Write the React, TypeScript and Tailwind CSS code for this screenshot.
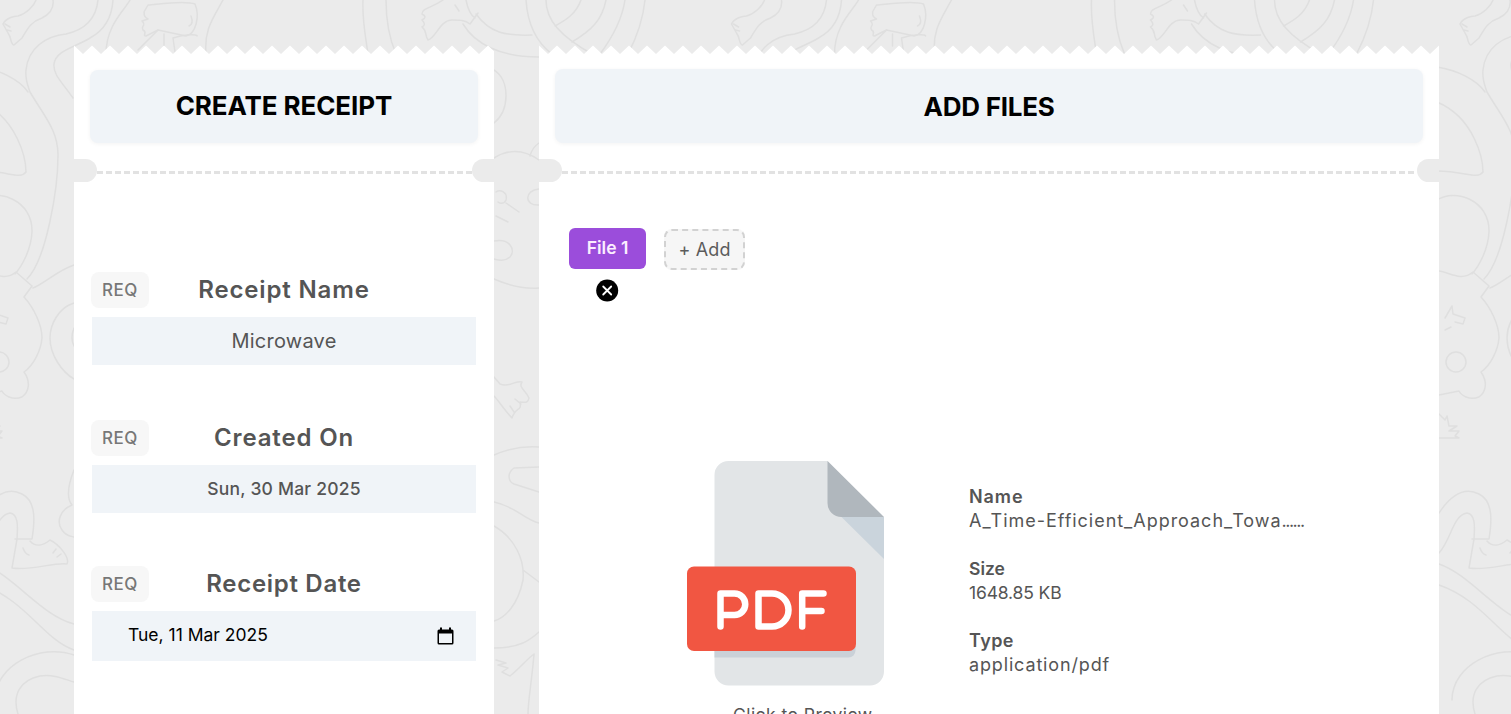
function Doodles() {
  return (
    <svg className="pointer-events-none absolute inset-0 h-full w-full" aria-hidden="true">
      <defs>
        <g id="doodle" fill="none" stroke="#dfdfdf" strokeWidth="1.5" strokeLinecap="round" strokeLinejoin="round">
          <path d="M53 0C54 8 50 14 42 18C30 22 27 30 22 38L14 45C10 44 12 38 8 33L3 24C6 18 14 16 18 16C26 14 34 6 36 0M5 24l5 3M7 30l4 1" />
          <path d="M98 0C96 20 84 30 66 34C46 36 28 48 26 70C25 80 28 86 30 92C44 116 58 130 58 155C58 190 46 260 27 279" />
          <path d="M113 0C112 16 105 30 90 38C74 48 56 50 54 64C53 75 62 82 73 98" />
          <path d="M-20 67C0 70 20 80 28 92M-20 102C18 118 26 160 26 172C20 180 8 171 -20 171M-20 200C-2 188 33 200 32 232C31 250 22 266 15 274" />
          <path d="M-18 271C-8 272 4 282 16 272L32 286L24 297C34 308 42 325 42 338C41 350 34 365 24 372C31 382 29 392 22 397C12 401 4 395 2 391L-18 395" />
          <path d="M33 288C44 284 58 270 74 265M74 303C58 308 50 325 50 338C50 355 62 372 74 379M74 328q-4 10 0 18" />
          <circle cx="-1" cy="362" r="10" />
          <path d="M-12 318L-5 306L-4 314L8 318L6 324L-2 322M-12 330l6-3M-18 414l6 6l2-4l2 10l8 0l-8 5l10 0l-4 5l4 2H-18" />
          <path d="M-18 513C-4 492 10 488 22 494C34 500 36 515 32 539H15M-18 553C-6 540 -4 515 10 513C18 514 18 525 17 539L12 568C30 571 55 562 67 564C70 558 60 545 50 540C44 545 36 548 30 541M23 548q2 6 6 7M56 549l-3 4M61 554l-4 3" />
          <path d="M-18 564C14 575 40 615 74 624M-18 585C26 600 44 640 74 650M-5 700C-5 665 40 643 74 655M18 714C12 695 20 680 40 676C54 674 64 679 74 682" />
          <path d="M74 470C66 490 68 500 72 505C60 510 56 522 62 530C66 536 70 536 74 537" />
          <path d="M144 12L148 5C160 4 185 0 195 4C200 16 196 34 186 36L158 30L146 36C142 36 148 32 143 30C140 26 147 26 142 21L148 19C142 16 145 12 144 12M191 16q3 8-2 10" />
          <path d="M164 34V46M175 52L173 38C185 34 198 34 197 36M158 30L138 50M106 54C106 25 125 10 130 0M223 0C212 20 204 30 206 54" />
          <path d="M363 0C362 20 366 40 368 54M386 0C386 20 390 40 396 54" />
          <path d="M443 0C432 8 422 8 422 14C426 16 426 18 422 20C426 24 424 26 422 27C428 32 424 34 428 40C436 38 440 20 452 20C460 20 465 20 470 24L478 13M466 0C468 10 472 16 475 18M455 5l4 6" />
          <path d="M476 14C490 33 505 36 532 35M463 24C475 44 500 57 539 57" />
          <path d="M526 0C528 30 540 45 552 54M546 0C546 20 560 36 592 54M581 0C576 14 566 20 555 26M606 0C602 20 592 30 572 42M625 0C622 20 612 38 600 54M645 0C643 20 638 35 628 54" />
          <path d="M494 70C510 80 510 110 494 123M494 158C510 148 525 150 539 160M530 156C532 148 536 145 539 143" />
          <path d="M496 192C500 189 508 192 506 200C503 206 498 202 498 202M506 203L519 212M496 216L508 222M494 241C510 238 516 250 510 257C504 262 498 260 494 259M539 189C524 190 524 206 539 205M494 279C510 286 525 289 539 288" />
          <path d="M494 377L500 384C510 388 514 380 522 382C518 388 526 390 529 398C528 404 524 402 520 402C522 412 516 406 512 418C506 412 498 400 494 396M510 406l4 6M515 399l6 5" />
          <path d="M494 455C510 448 525 446 539 447M539 467L514 468C506 474 509 482 514 484L539 492M494 502C515 506 525 520 539 523M494 526C515 538 525 560 523 580C518 605 505 618 494 621M523 570L539 582" />
          <path d="M494 648C520 648 530 640 539 632M496 660L506 663L498 665L508 668L502 672L510 676C520 668 526 660 534 654C532 680 528 700 528 714" />
        </g>
      </defs>
      <use href="#doodle" />
      <use href="#doodle" x="728.5" />
      <use href="#doodle" x="1457" />
    </svg>
  );
}

function TornEdge({ width }: { width: number }) {
  const points = ["0,10", "0,0.5"];
  for (let x = 9; x < width + 9; x += 18) {
    points.push(`${x},9`, `${x + 9},0.5`);
  }
  points.push(`${width + 9},10`);
  return (
    <svg width={width} height="10" viewBox={`0 0 ${width} 10`} className="block shrink-0" aria-hidden="true">
      <polygon points={points.join(" ")} fill="#fff" />
    </svg>
  );
}

function Perforation() {
  return (
    <div className="flex h-[23px] items-center justify-between">
      <span className="h-[23px] w-[23px] shrink-0 rounded-r-full bg-[#ebebeb]" />
      <span className="mt-[4px] h-[3px] flex-1 bg-[repeating-linear-gradient(90deg,#e2e2e2_0_6px,#fff_6px_9px)]" />
      <span className="h-[23px] w-[22px] shrink-0 rounded-l-full bg-[#ebebeb]" />
    </div>
  );
}

function FieldHead({ title, className }: { title: string; className: string }) {
  return (
    <div className="grid h-9 grid-cols-[58px_1fr_58px] items-center">
      <span className="flex h-9 items-center justify-center rounded-lg bg-[#f7f7f7] pt-[2px] text-[17px] font-medium tracking-[0.5px] text-[#777]">
        REQ
      </span>
      <h2 className={`text-center text-[24px] font-semibold whitespace-nowrap text-[#555] ${className}`}>{title}</h2>
    </div>
  );
}

function PdfIcon() {
  return (
    <svg width="199" height="227" viewBox="-0.5 -0.5 199 227" className="block" aria-label="PDF document">
      <path d="M42 0.500H141L197.500 57V211a14 14 0 0 1-14 14H42a14 14 0 0 1-14-14V14.500a14 14 0 0 1 14-14Z" fill="#e2e5e7" />
      <path d="M155 56.500H197.500V98.500Z" fill="#cad4dc" />
      <path d="M141 0.500L197.500 56.500H155a14 14 0 0 1-14-14Z" fill="#b0b7bd" />
      <path d="M28 185H169v5a7 7 0 0 1-7 7H28Z" fill="#cad1d8" />
      <rect x="0.500" y="106" width="169" height="84.500" rx="7" fill="#f15642" />
      <g fill="none" stroke="#fff" strokeWidth="6.500" strokeLinecap="round" strokeLinejoin="round">
        <path d="M34 166V133H48a10.750 10.750 0 0 1 0 21.500H34" />
        <path d="M72 133V166H85.500a16.500 16.500 0 0 0 0-33Z" />
        <path d="M137 133H115.700V166M115.700 150.500H135" />
      </g>
    </svg>
  );
}

const details = [
  { label: "Name", value: "A_Time-Efficient_Approach_Towa", rest: "......", labelClass: "text-[18px] tracking-[0.9px]", valueClass: "text-[18px] tracking-[0.97px]" },
  { label: "Size", value: "1648.85 KB", rest: "", labelClass: "text-[17.500px]", valueClass: "text-[17.500px] tracking-[-0.15px]" },
  { label: "Type", value: "application/pdf", rest: "", labelClass: "text-[18px] tracking-[0.4px]", valueClass: "text-[18px] tracking-[0.85px]" },
];

export default function App() {
  return (
    <div className="relative h-[714px] overflow-hidden bg-[#ebebeb] font-['Inter',sans-serif] text-[#555]">
      <Doodles />
      <main className="relative flex items-start gap-[45px] pt-[45px] pl-[74px]">
        <section className="flex w-[420px] shrink-0 flex-col">
          <TornEdge width={420} />
          <div className="h-[700px] bg-white">
            <div className="px-4 pt-[15px]">
              <h1 className="flex h-[73px] items-center justify-center rounded-lg bg-[#f0f4f8] pb-[2px] text-[26px] font-bold tracking-[-0.1px] text-black shadow-[0_1px_4px_rgba(0,0,0,0.05)]">
                CREATE RECEIPT
              </h1>
            </div>
            <div className="h-4" />
            <Perforation />
            <div className="flex flex-col px-[17px] pt-[90px]">
              <FieldHead title="Receipt Name" className="tracking-[0.85px]" />
              <div className="mx-px mt-[9px] flex h-12 items-center justify-center bg-[#f0f4f8] text-[20px] tracking-[0.25px]">
                Microwave
              </div>
              <div className="h-[55px]" />
              <FieldHead title="Created On" className="tracking-[0.85px]" />
              <div className="mx-px mt-[9px] flex h-12 items-center justify-center bg-[#f0f4f8] text-[17.500px] font-medium tracking-[0.22px]">
                Sun, 30 Mar 2025
              </div>
              <div className="h-[53px]" />
              <FieldHead title="Receipt Date" className="tracking-[0.7px]" />
              <div className="mx-px mt-[9px] flex h-[50px] items-center justify-between bg-[#f0f4f8] pr-[22px] pl-[36px] text-[17.500px] text-black">
                <span className="pb-[2px]">Tue, 11 Mar 2025</span>
                <svg width="17" height="18" viewBox="0 0 17 18" aria-hidden="true">
                  <path
                    d="M3 0.500h2v2h7v-2h2v2H15a1.500 1.500 0 0 1 1.500 1.500v12a1.500 1.500 0 0 1-1.500 1.500H2A1.500 1.500 0 0 1 .5 16V4A1.500 1.500 0 0 1 2 2.500h1ZM2 6.500V16h13V6.500Z"
                    fill="#000"
                  />
                </svg>
              </div>
            </div>
          </div>
        </section>
        <section className="flex w-[900px] shrink-0 flex-col">
          <TornEdge width={900} />
          <div className="h-[700px] bg-white">
            <div className="px-4 pt-[14px]">
              <h1 className="flex h-[74px] items-center justify-center rounded-lg bg-[#f0f4f8] text-[26px] font-bold tracking-[-0.25px] text-black shadow-[0_1px_4px_rgba(0,0,0,0.05)]">
                ADD FILES
              </h1>
            </div>
            <div className="h-4" />
            <Perforation />
            <div className="flex items-start gap-[18px] pt-[46px] pl-[30px]">
              <div className="flex w-[77px] flex-col items-center gap-[10px]">
                <button className="h-[41px] w-full rounded-md bg-[#9b4ddb] text-[17.500px] font-semibold text-[#fbeeff]">
                  File 1
                </button>
                <svg width="23" height="23" viewBox="0 0 23 23" aria-hidden="true">
                  <circle cx="11.200" cy="11.500" r="11" fill="#000" />
                  <path d="M7.200 7.500l8 8m0-8l-8 8" stroke="#fff" strokeWidth="1.800" strokeLinecap="round" />
                </svg>
              </div>
              <button className="mt-px h-[41px] w-[81px] rounded-lg border-2 border-dashed border-[#d2d2d2] bg-[#f6f6f6] text-[18px] tracking-[0.15px] text-[#5c5c5c]">
                + Add
              </button>
            </div>
            <div className="flex items-start pt-[158px] pl-[147px]">
              <div className="flex w-[199px] flex-col">
                <PdfIcon />
                <p className="mt-[15px] pl-[47px] text-[17.500px] tracking-[0.45px] whitespace-nowrap">Click to Preview</p>
              </div>
              <dl className="mt-[25px] ml-[84px] flex flex-col gap-6 leading-6">
                {details.map((d) => (
                  <div key={d.label}>
                    <dt className={`h-6 font-semibold ${d.labelClass}`}>{d.label}</dt>
                    <dd className={`h-6 whitespace-nowrap ${d.valueClass}`}>
                      {d.value}
                      {d.rest && <span className="tracking-[-1.5px]">{d.rest}</span>}
                    </dd>
                  </div>
                ))}
              </dl>
            </div>
          </div>
        </section>
      </main>
    </div>
  );
}
